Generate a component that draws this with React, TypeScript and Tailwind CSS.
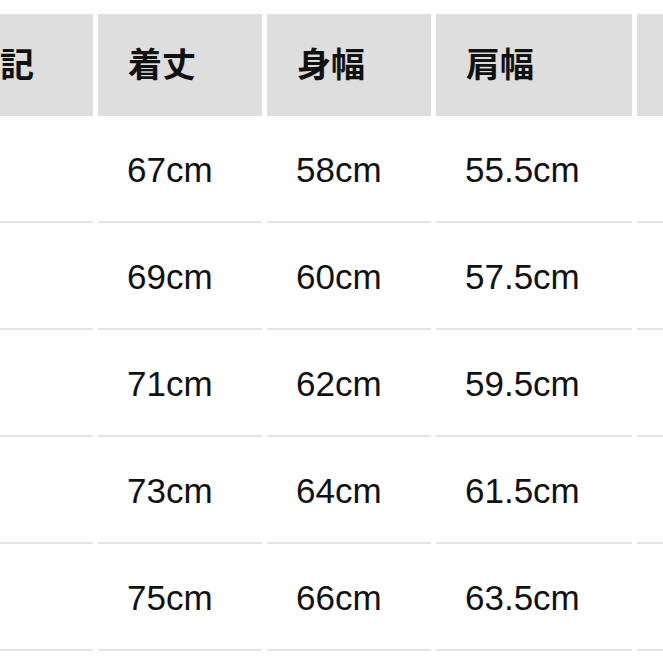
const COLS = [
  { label: 'サイズ表記', w: 'w-[258px] ml-[-165px]' },
  { label: '着丈', w: 'w-[164px]' },
  { label: '身幅', w: 'w-[164px]' },
  { label: '肩幅', w: 'w-[196px]' },
  { label: '袖丈', w: 'w-[196px]' },
]

const ROWS = [
  ['S', '67cm', '58cm', '55.5cm', '22cm'],
  ['M', '69cm', '60cm', '57.5cm', '23cm'],
  ['L', '71cm', '62cm', '59.5cm', '24cm'],
  ['XL', '73cm', '64cm', '61.5cm', '25cm'],
  ['XXL', '75cm', '66cm', '63.5cm', '26cm'],
]

export default function App() {
  return (
    <div className="w-[663px] h-[663px] overflow-hidden bg-white pt-[14px]">
      {/* header */}
      <div className="flex gap-[5px]">
        {COLS.map((c) => (
          <div
            key={c.label}
            className={`${c.w} shrink-0 h-[102px] bg-[#dedede] flex items-center pl-[30px] pb-[6px] text-[34px] font-bold text-[#111] whitespace-nowrap`}
            style={{ fontFamily: '"Noto Sans CJK JP", "Noto Sans", sans-serif' }}
          >
            {c.label}
          </div>
        ))}
      </div>

      {/* body */}
      {ROWS.map((r) => (
        <div key={r[0]} className="flex gap-[5px]">
          {r.map((v, i) => (
            <div
              key={i}
              className={`${COLS[i].w} shrink-0 h-[107px] border-b-2 border-[#e4e4e4] flex items-center pl-[29px] pt-[4px] text-[35px] text-[#111] whitespace-nowrap`}
              style={{ fontFamily: '"Liberation Sans", Arial, sans-serif' }}
            >
              {v}
            </div>
          ))}
        </div>
      ))}
    </div>
  )
}
